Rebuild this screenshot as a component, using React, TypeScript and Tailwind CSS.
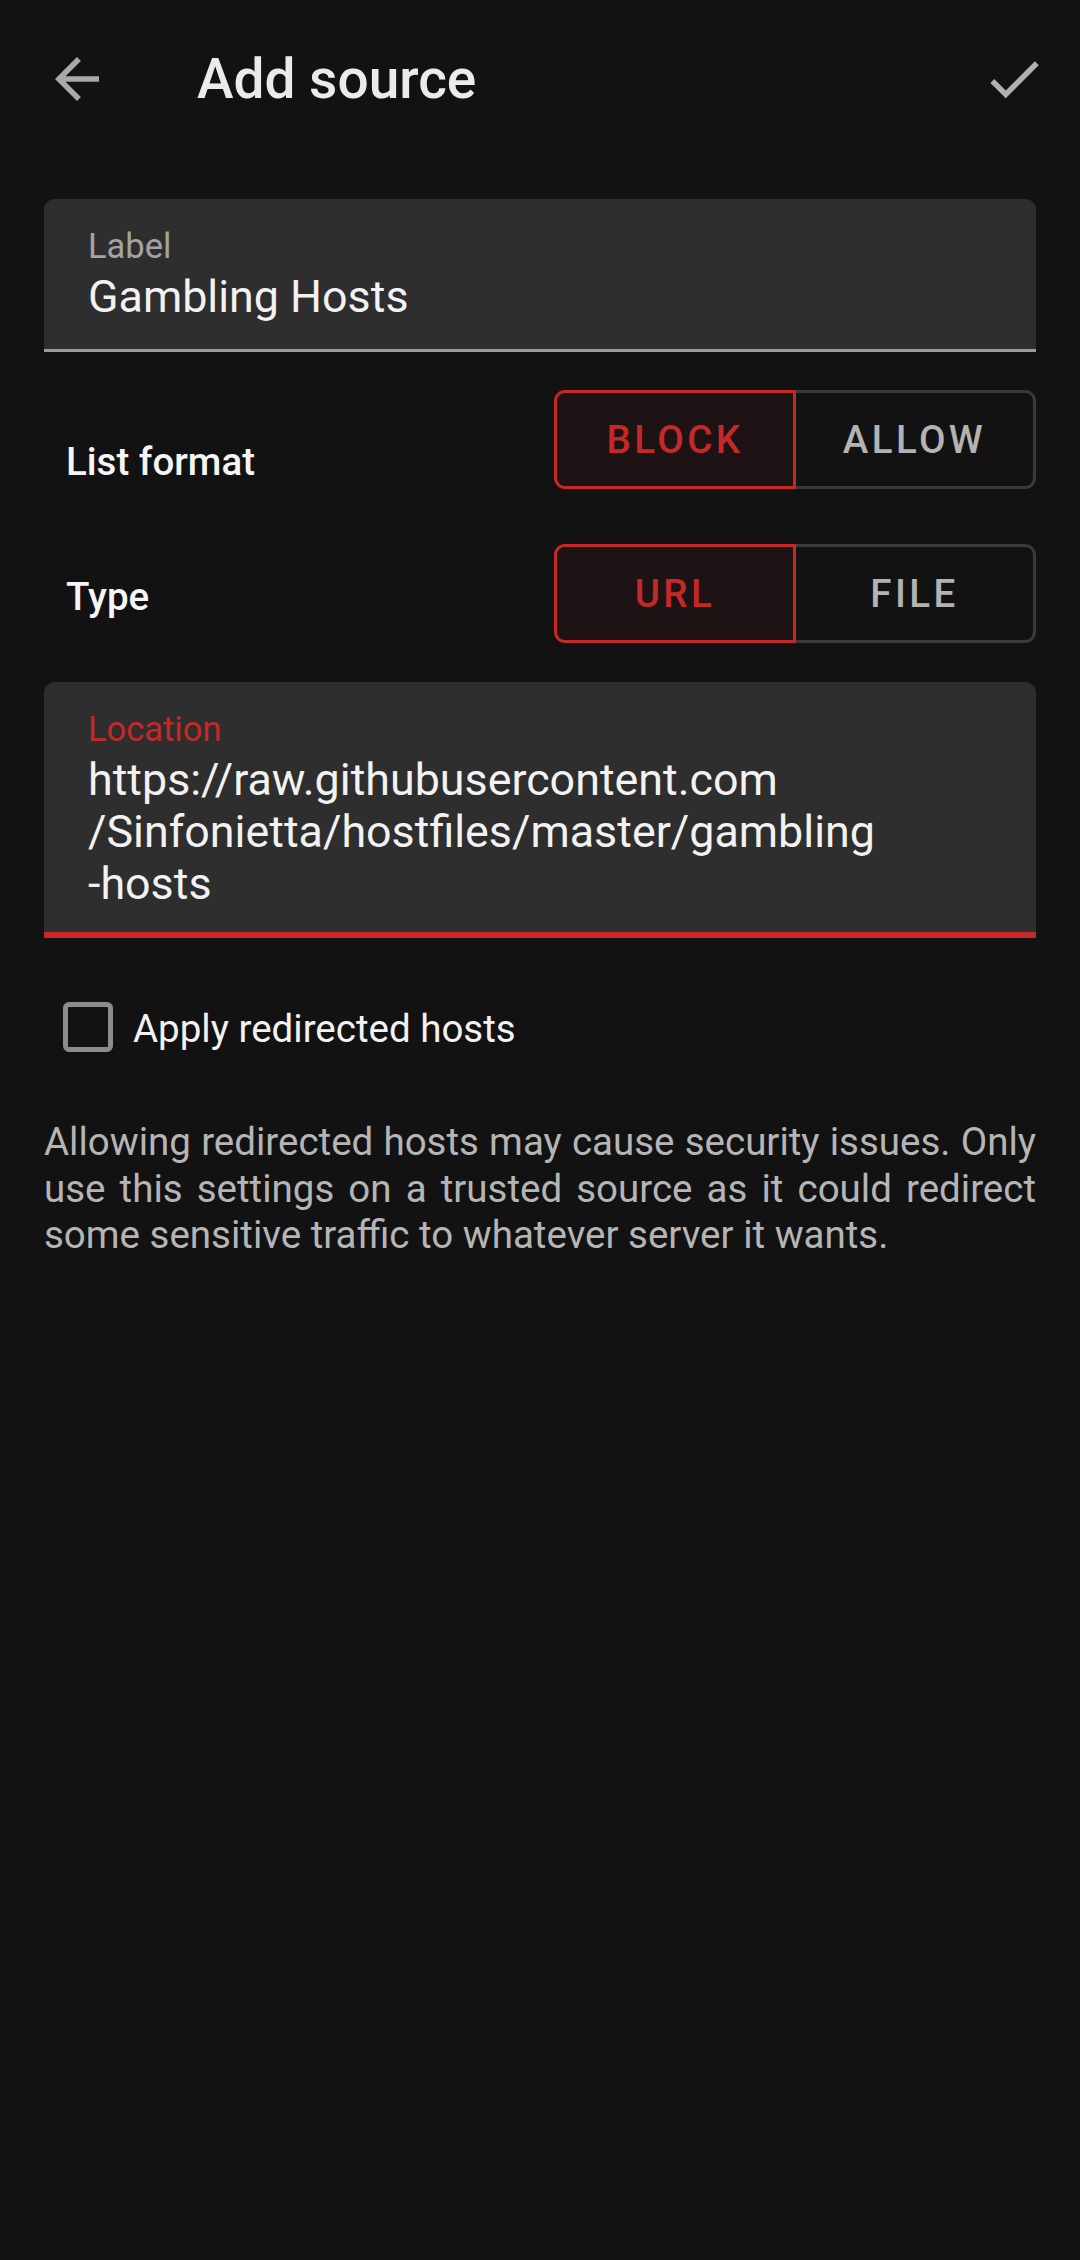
import React from "react";

function ToggleGroup({ left, right }: { left: string; right: string }) {
  return (
    <div className="flex h-[99px] w-[482px]">
      <div className="flex h-full w-[242px] items-center justify-center rounded-l-[11px] border-[3px] border-[#c62828] bg-[#1e1314] text-[38.5px] font-medium tracking-[3.4px] text-[#c62828]">
        {left}
      </div>
      <div className="flex h-full flex-1 items-center justify-center rounded-r-[11px] border-[3px] border-l-0 border-[#3a3a3a] text-[38.5px] font-medium tracking-[3.4px] text-[#b3b3b3]">
        {right}
      </div>
    </div>
  );
}

export default function App() {
  return (
    <div className="min-h-[2260px] w-full bg-[#121212] font-['Roboto',sans-serif]">
      {/* Header */}
      <div className="flex h-[158px] items-center pl-[44px] pr-[33px]">
        <svg width="66" height="66" viewBox="0 0 24 24" fill="#a9a9a9">
          <path d="M20 11H7.83l5.59-5.59L12 4l-8 8 8 8 1.41-1.41L7.83 13H20v-2z" />
        </svg>
        <div className="ml-[87px] text-[55px] font-medium leading-[66px] text-[#ebebeb]">
          Add source
        </div>
        <svg className="ml-auto" width="66" height="66" viewBox="0 0 24 24" fill="#b0b0b0">
          <path d="M9 16.17L4.83 12l-1.42 1.41L9 19 21 7l-1.41-1.41z" />
        </svg>
      </div>

      <div className="px-[44px]">
        {/* Label field */}
        <div className="mt-[41px] rounded-t-[11px] border-b-[3px] border-[#9a9a9a] bg-[#2e2e2e] pb-[26px] pl-[44px] pt-[27px]">
          <div className="text-[34.5px] leading-[40px] text-[#a3a3a3]">Label</div>
          <div className="mt-[5px] text-[44.8px] leading-[52px] text-[#f2f2f2]">Gambling Hosts</div>
        </div>

        {/* List format */}
        <div className="mt-[38px] flex items-start justify-between">
          <div className="ml-[22px] mt-[49px] text-[38.5px] font-medium leading-[46px] text-[#f5f5f5]">
            List format
          </div>
          <ToggleGroup left="BLOCK" right="ALLOW" />
        </div>

        {/* Type */}
        <div className="mt-[55px] flex items-start justify-between">
          <div className="ml-[22px] mt-[30px] text-[38.5px] font-medium leading-[46px] text-[#f5f5f5]">
            Type
          </div>
          <ToggleGroup left="URL" right="FILE" />
        </div>

        {/* Location field */}
        <div className="mt-[39px] rounded-t-[11px] border-b-[6px] border-[#c62828] bg-[#2e2e2e] pb-[22px] pl-[44px] pt-[27px]">
          <div className="text-[34.5px] leading-[40px] text-[#c62828]">Location</div>
          <div className="mt-[5px] text-[44.8px] leading-[52px] text-[#f2f2f2]">
            <span className="block">https://raw.githubusercontent.com</span>
            <span className="block">/Sinfonietta/hostfiles/master/gambling</span>
            <span className="block">-hosts</span>
          </div>
        </div>

        {/* Checkbox */}
        <div className="mt-[64px] flex items-start pl-[19px]">
          <div className="h-[50px] w-[50px] rounded-[6px] border-[5px] border-[#8c8c8c]" />
          <div className="ml-[20px] mt-[4px] text-[38.5px] leading-[46px] text-[#f2f2f2]">
            Apply redirected hosts
          </div>
        </div>

        {/* Note */}
        <div className="mt-[67px] text-[38.5px] leading-[46.5px] text-[#b5b5b5]">
          <span className="block whitespace-nowrap text-justify [text-align-last:justify]">
            Allowing redirected hosts may cause security issues. Only
          </span>
          <span className="block whitespace-nowrap text-justify [text-align-last:justify]">
            use this settings on a trusted source as it could redirect
          </span>
          <span className="block whitespace-nowrap">some sensitive traffic to whatever server it wants.</span>
        </div>
      </div>
    </div>
  );
}
